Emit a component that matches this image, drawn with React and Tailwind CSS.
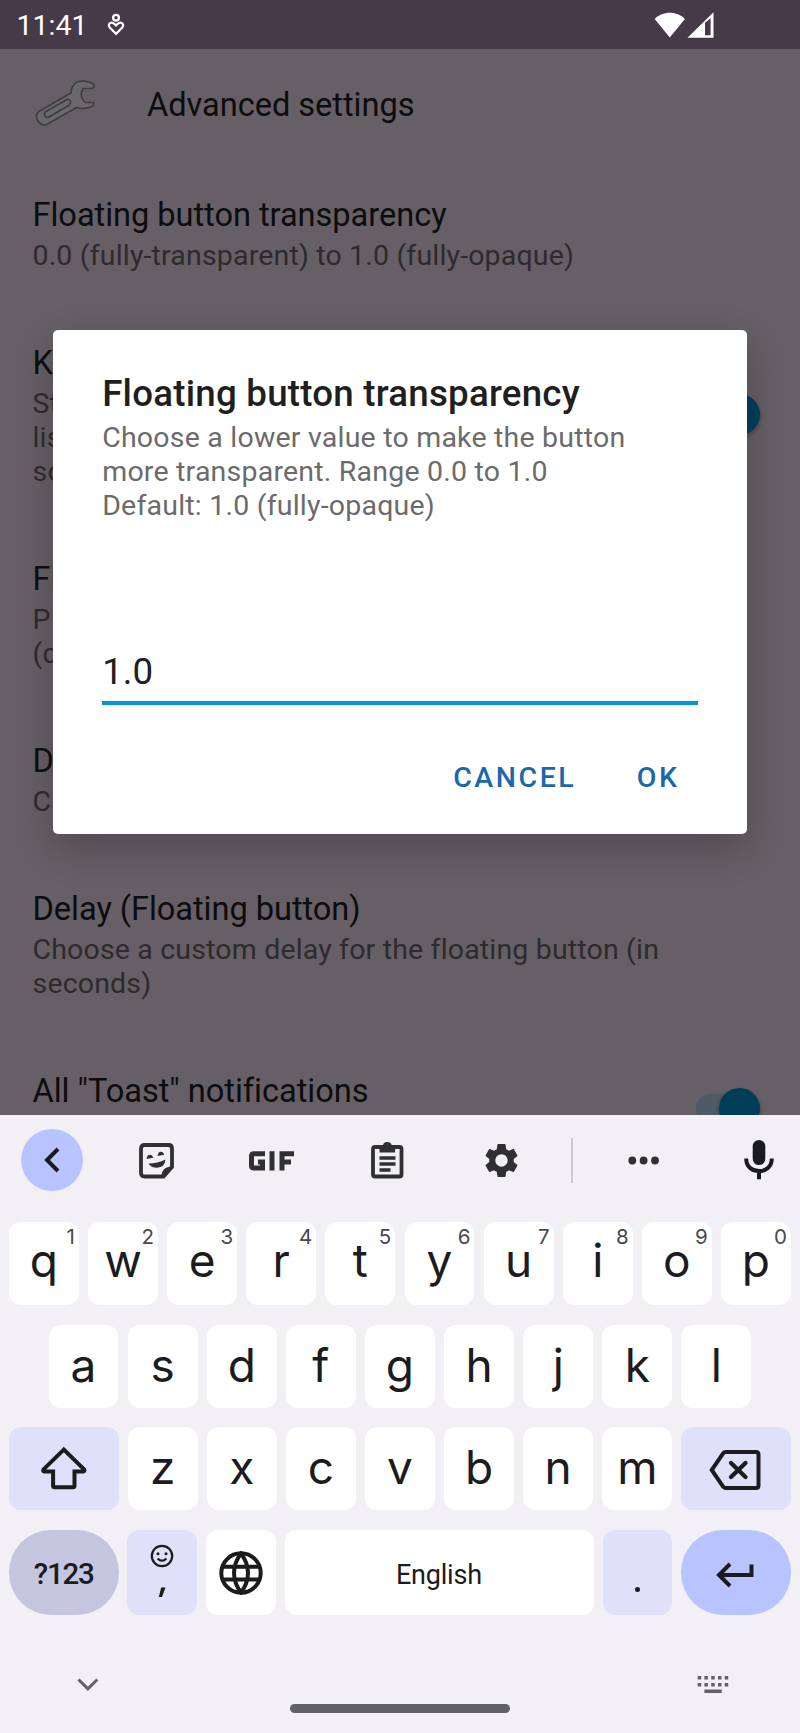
import React from "react";

function StatusBar() {
  return (
    <header className="flex h-[49px] shrink-0 items-center bg-[#473a48] pl-[16.500px] text-white">
      <span className="mt-[4px] w-[68px] whitespace-nowrap text-[28.500px] leading-none">11:41</span>
      <svg className="ml-[21px] h-[26px] w-[20px]" viewBox="0 0 20 26" fill="none" stroke="#fff" strokeWidth="2.300">
        <circle cx="10" cy="5.700" r="2.900" />
        <path d="M10 21.800 3.700 15.500C2 13.600 3 10.800 5.600 10.600c1.800-.1 2.800 1.200 4.400 2.800 1.600-1.600 2.600-2.900 4.400-2.800 2.600.2 3.600 3 1.900 4.900z" />
      </svg>
      <svg className="ml-[528px] h-[28px] w-[62px]" viewBox="0 0 62 28" fill="#fff">
        <path d="M15.800 26.500 .7 8.100C8.500-.3 23.100-.3 30.900 8.100z" />
        <path fillRule="evenodd" d="M33.500 26.700 59.500 1.300v25.400zM51 11.800v12.400h5.600V7.200z" />
      </svg>
    </header>
  );
}

function Switch() {
  return (
    <span className="flex h-[41px] w-[65px] shrink-0 items-center justify-end rounded-full">
      <span className="flex h-[30px] w-[64px] items-center justify-end rounded-full bg-[#4e5a65]">
        <span className="h-[41px] w-[41px] shrink-0 rounded-full bg-[#003e58] shadow-[0_2px_4px_rgba(0,0,0,0.35)]" />
      </span>
    </span>
  );
}

function Setting({ title, lines, on }) {
  return (
    <div className="flex shrink-0 items-center justify-between py-[35.500px] pr-[40px] pl-[32.500px]">
      <div>
        <div className="text-[32.600px] leading-[38px] tracking-[-0.040px] text-[#0c0d0e]">{title}</div>
        <div className="mt-[5px] text-[28.500px] leading-[34px] tracking-[0.170px] text-[#2c2b2e]">
          {lines.map((l) => (
            <div key={l} className="h-[34px] whitespace-nowrap">{l}</div>
          ))}
        </div>
      </div>
      {on && <span className="-mt-[3px]"><Switch /></span>}
    </div>
  );
}

function Dialog() {
  return (
    <div className="absolute top-[281px] left-[53.400px] flex h-[503.500px] w-[693.400px] flex-col rounded-[5px] bg-white px-[48.800px] shadow-[0_14px_36px_rgba(35,35,40,0.32)]">
      <h2 className="mt-[42px] whitespace-nowrap text-[36.700px] leading-[44px] font-medium tracking-[0.230px] text-[#1f1f20]">Floating button transparency</h2>
      <div className="mt-[5px] text-[28.500px] leading-[34px] tracking-[0.210px] whitespace-nowrap text-[#6b6b6b]">
        <p>Choose a lower value to make the button</p>
        <p>more transparent. Range 0.0 to 1.0</p>
        <p>Default: 1.0 (fully-opaque)</p>
      </div>
      <div className="mt-[127px] h-[55px] w-[596px] border-b-4 border-[#0094d9] text-[36.700px] leading-[44px] text-[#202021]">1.0</div>
      <div className="mt-[55px] flex justify-end gap-[60.500px] pr-[18.500px] text-[28.500px] leading-[36px] font-medium tracking-[2.540px] text-[#1b67ac]">
        <button>CANCEL</button>
        <button>OK</button>
      </div>
    </div>
  );
}

function Key({ label, hint }) {
  return (
    <div className="relative flex h-[83px] w-[69.900px] justify-center rounded-[12px] bg-white font-['Inter',sans-serif] text-[46px] leading-[83px] text-[#1c1b1d]">
      <span className={hint ? "-mt-[2.500px]" : "-mt-px"}>{label}</span>
      {hint && <span className="absolute top-[2.500px] right-[4px] text-[20.500px] leading-[25px] text-[#49484b]">{hint}</span>}
    </div>
  );
}

function Toolbar() {
  return (
    <div className="flex h-[106.700px] items-start pt-[13.500px] pl-[21px]">
      <div className="flex h-[62px] w-[62px] shrink-0 items-center justify-center rounded-full bg-[#b7c4ff]">
        <svg className="h-[26px] w-[18px]" viewBox="0 0 18 26" fill="none" stroke="#1b1b1f" strokeWidth="4"><path d="M15 2 4 13l11 11" /></svg>
      </div>
      <svg className="mt-[14px] ml-[56px] h-[36px] w-[35px] shrink-0" viewBox="0 0 35 36">
        <path d="M5.500 2h24Q33 2 33 5.500V24L24.500 33.500h-19Q2 33.500 2 30V5.500Q2 2 5.500 2z" fill="none" stroke="#303033" strokeWidth="3.800" />
        <path d="M33.500 23.500 24 34h-1.500c0-7 3.500-10.500 11-10.500zM9.500 20.500q9 0 17-4-.7 8-8.500 8.200-6 .1-8.500-4.200zM7.500 16q.7-4.300 3.300-4.300 2.500 0 3.500 3zM18.500 13q.7-4.300 3.300-4.300 2.500 0 3.500 3z" fill="#303033" />
      </svg>
      <svg className="mt-[21.500px] ml-[75px] h-[22px] w-[45px] shrink-0" viewBox="0 0 45 22" fill="none" stroke="#303033" strokeWidth="5">
        <path d="M16 3.700H5Q2.500 3.700 2.500 6.200v9.300Q2.500 18 5 18h8.500V12H9M23 1.200v19.300M33 20.500V3.700h12M33 12h9" />
      </svg>
      <svg className="mt-[12.500px] ml-[76.500px] h-[38px] w-[33px] shrink-0" viewBox="0 0 33 38">
        <rect x="2" y="6" width="28.500" height="29.500" rx="2" fill="none" stroke="#303033" strokeWidth="3.800" />
        <path fillRule="evenodd" d="M8.500 4.500h3.200a4.800 4.800 0 0 1 9.200 0h3.200v7H8.500zM16.300 3.800a2 2 0 1 0 0 4 2 2 0 0 0 0-4z" fill="#303033" />
        <path d="M8.500 17h16M8.500 23h16M8.500 29h11" stroke="#303033" strokeWidth="3.400" />
      </svg>
      <svg className="mt-[11px] ml-[77px] h-[41px] w-[41px] shrink-0" viewBox="0 0 24 24" fill="#303033">
        <path d="M19.140 12.940c.040-.3.060-.610.060-.940 0-.320-.020-.640-.070-.940l2.030-1.580c.180-.140.230-.410.120-.610l-1.920-3.320c-.120-.220-.370-.290-.590-.220l-2.390.960c-.5-.380-1.030-.7-1.620-.940l-.360-2.540c-.040-.240-.240-.410-.480-.410h-3.840c-.240 0-.430.170-.470.410l-.360 2.540c-.590.240-1.130.570-1.620.940l-2.390-.960c-.220-.080-.470 0-.590.220L2.740 8.870c-.120.210-.080.470.120.610l2.030 1.580c-.050.3-.090.630-.090.940s.020.640.070.940l-2.030 1.580c-.180.140-.230.410-.120.610l1.920 3.320c.120.220.370.290.590.220l2.390-.960c.5.380 1.030.7 1.620.940l.360 2.540c.050.240.240.410.480.410h3.840c.240 0 .440-.170.470-.410l.360-2.540c.590-.240 1.130-.560 1.620-.940l2.390.960c.220.080.470 0 .590-.220l1.920-3.320c.120-.220.070-.470-.120-.610l-2.010-1.580zM12 15.600c-1.980 0-3.600-1.620-3.600-3.600s1.620-3.600 3.600-3.600 3.600 1.620 3.600 3.600-1.620 3.600-3.600 3.600z" />
      </svg>
      <div className="mt-[9.500px] ml-[49px] h-[45px] w-[2px] shrink-0 bg-[#cbcacf]" />
      <svg className="mt-[27px] ml-[55.500px] h-[9px] w-[32px] shrink-0" viewBox="0 0 32 9" fill="#303033">
        <circle cx="4.300" cy="4.500" r="3.900" /><circle cx="15.600" cy="4.500" r="3.900" /><circle cx="27" cy="4.500" r="3.900" />
      </svg>
      <svg className="mt-[11.500px] ml-[84px] h-[40px] w-[30px] shrink-0" viewBox="0 0 30 40">
        <rect x="8.700" y="0" width="12.600" height="25" rx="6.300" fill="#1b1b1f" />
        <path d="M2.200 18.500c0 8 5.500 12.600 12.800 12.600s12.800-4.600 12.800-12.600M15 31v8.300" fill="none" stroke="#1b1b1f" strokeWidth="4" />
      </svg>
    </div>
  );
}

const hints = "1234567890";

function Keyboard() {
  return (
    <section className="flex h-[618px] shrink-0 flex-col bg-[#f2f0f5]">
      <Toolbar />
      <div className="flex flex-col gap-[19.700px] px-[9px]">
        <div className="flex justify-between">
          {"qwertyuiop".split("").map((c, i) => <Key key={c} label={c} hint={hints[i]} />)}
        </div>
        <div className="flex justify-between px-[39.600px]">
          {"asdfghjkl".split("").map((c) => <Key key={c} label={c} />)}
        </div>
        <div className="flex justify-between">
          <div className="flex h-[83px] w-[109.500px] items-center justify-center rounded-[12px] bg-[#dfe0fa]">
            <svg className="-mt-px h-[46px] w-[48px]" viewBox="0 0 48 46" fill="none" stroke="#1c1b1d" strokeWidth="4">
              <path d="M23.800 4.600 3.500 24.400q-1 1.900 1 2.100h8.600v14.200q0 1.600 1.600 1.600h18.200q1.600 0 1.600-1.600V26.500h8.600q2-.2 1-2.100z" />
            </svg>
          </div>
          {"zxcvbnm".split("").map((c) => <Key key={c} label={c} />)}
          <div className="flex h-[83px] w-[109.500px] items-center justify-center rounded-[12px] bg-[#dfe0fa]">
            <svg className="mt-[3px] mr-[2px] h-[42px] w-[52px]" viewBox="0 0 52 42" fill="none" stroke="#1c1b1d" strokeWidth="4" strokeLinecap="round">
              <path d="M16.500 3H47q2.500 0 2.500 2.500v31Q49.500 39 47 39H16.500q-1.500 0-2.400-1.300L2.700 21 14.100 4.300Q15 3 16.500 3z" />
              <path d="m22 14 14.500 14M36.500 14 22 28" strokeWidth="4.300" />
            </svg>
          </div>
        </div>
        <div className="flex justify-between">
          <div className="flex h-[85px] w-[109.500px] items-center justify-center rounded-[42px] bg-[#c4c5df] pt-[4px] text-[29.500px] font-medium tracking-[-1.200px] text-[#1c1b1d]">?123</div>
          <div className="flex h-[85px] w-[69.900px] flex-col items-center rounded-[12px] bg-[#dfe0fa] pt-[14px]">
            <svg className="h-[24px] w-[24px] shrink-0" viewBox="0 0 24 24" fill="none" stroke="#1c1b1d" strokeWidth="2.200">
              <circle cx="12" cy="12" r="10.200" />
              <path d="M7.600 14.400q4.400 4.500 8.800 0" />
              <circle cx="8" cy="9.700" r="1.500" fill="#1c1b1d" stroke="none" /><circle cx="16" cy="9.700" r="1.500" fill="#1c1b1d" stroke="none" />
            </svg>
            <svg className="mt-[19px] h-[11px] w-[8px] shrink-0" viewBox="0 0 8 11" fill="#1c1b1d"><path d="M3.200.5h4.300L4 10H.8z" /></svg>
          </div>
          <div className="flex h-[85px] w-[69.900px] items-center justify-center rounded-[12px] bg-white">
            <svg className="mr-px h-[44px] w-[44px]" viewBox="0 0 44 44" fill="none" stroke="#1c1b1d" strokeWidth="4">
              <circle cx="22" cy="22" r="19.700" />
              <path d="M3.500 15.700h37M3.500 28.600h37M22 2.500c-9.300 12.200-9.300 26.800 0 39 9.300-12.200 9.300-26.800 0-39z" />
            </svg>
          </div>
          <div className="flex h-[85px] w-[308.500px] items-center justify-center rounded-[12px] bg-white pt-[5px] pr-px text-[27px] tracking-[-0.200px] text-[#1c1b1d]">English</div>
          <div className="flex h-[85px] w-[69.900px] justify-center rounded-[12px] bg-[#dfe0fa] pt-[57px] pr-px"><span className="h-[5px] w-[5px] rounded-full bg-[#1c1b1d]" /></div>
          <div className="flex h-[85px] w-[109.500px] items-center justify-center rounded-[42px] bg-[#b7c4ff]">
            <svg className="mt-[4px] mr-[2px] h-[26px] w-[40px]" viewBox="0 0 40 26" fill="none" stroke="#1c1b1d" strokeWidth="4"><path d="M15 2 4 13l11 11M4 13h32.500V2.500" /></svg>
          </div>
        </div>
      </div>
      <div className="flex items-start pt-[61.300px] pl-[77px]">
        <svg className="mt-[2px] h-[14px] w-[22px]" viewBox="0 0 22 14" fill="none" stroke="#626165" strokeWidth="3"><path d="m1.500 1.500 9.400 9.400 9.400-9.400" /></svg>
        <div className="mt-[28px] ml-[190.500px] h-[9px] w-[220px] rounded-full bg-[#616064]" />
        <svg className="ml-[187.500px] h-[18px] w-[32px]" viewBox="0 0 32 18" fill="#626165">
          {[0.700, 7.400, 14.200, 21, 27.700].map((x) => (
            <g key={x}><rect x={x} y="0" width="3.500" height="3.500" /><rect x={x} y="7" width="3.500" height="3.500" /></g>
          ))}
          <rect x="7.400" y="13.500" width="17.300" height="3.500" />
        </svg>
      </div>
    </section>
  );
}

export default function App() {
  return (
    <div className="flex h-[1733px] w-[800px] flex-col overflow-hidden bg-[#665f65] font-['Roboto',sans-serif]">
      <StatusBar />
      <main className="relative flex h-[1066.300px] shrink-0 flex-col overflow-hidden">
        <div className="flex h-[111.200px] shrink-0 items-start pl-[35px]">
          <svg className="mt-[30px] h-[48px] w-[62px]" viewBox="0 0 62 48" fill="#69686a" stroke="#403c42" strokeWidth="1.600" strokeLinejoin="round">
            <path d="M36 14 5.500 31.500Q-.5 35 2.500 41q4 7 10 4L41.500 28.500Q49 31 57 27.500q2.500-1.500 1.500-4h-8q-7-6-2.500-14h8.500q3.500-1 2-4.500Q46-1 39.500 5 36 9 36 14z" />
            <path d="M32 20.500 11 32.500q-2.500 2-1 4.500t4 1L34.500 26q2-2 1-4t-3.500-1.500z" fill="none" />
          </svg>
          <h1 className="mt-[37.400px] ml-[50px] text-[32.600px] leading-[38px] tracking-[-0.040px] text-[#0c0d0e]">Advanced settings</h1>
        </div>
        <Setting title="Floating button transparency" lines={["0.0 (fully-transparent) to 1.0 (fully-opaque)"]} />
        <Setting title="K" lines={["St", "lis", "so"]} on />
        <Setting title="Fi" lines={["P", "(d"]} />
        <Setting title="D" lines={["C"]} />
        <Setting title="Delay (Floating button)" lines={["Choose a custom delay for the floating button (in", "seconds)"]} />
        <Setting title={'All "Toast" notifications'} lines={[""]} on />
        <Dialog />
      </main>
      <Keyboard />
    </div>
  );
}
